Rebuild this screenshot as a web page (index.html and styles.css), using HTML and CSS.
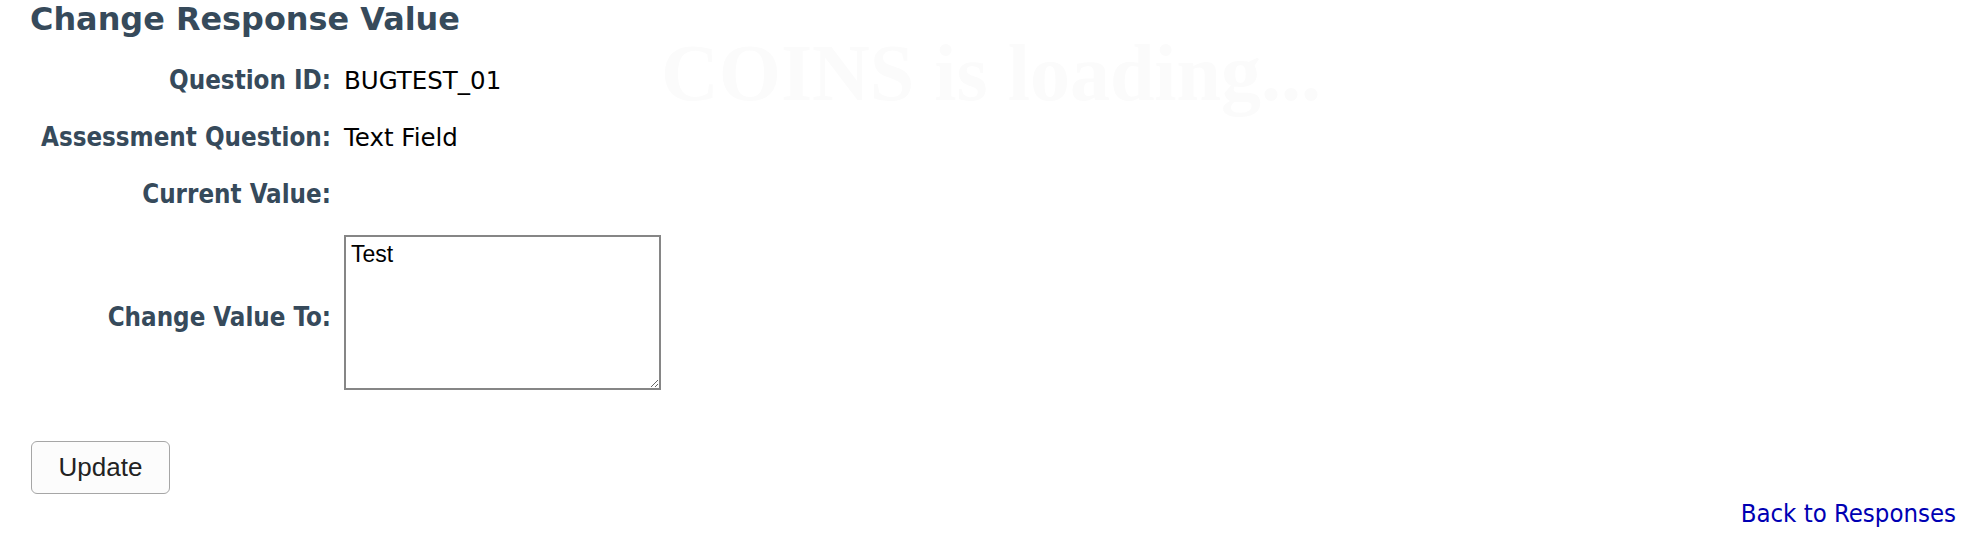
FILE: index.html
```html
<!DOCTYPE html>
<html lang="en">
<head>
    <meta charset="UTF-8">
    <title>Change Response Value</title>
    <link rel="stylesheet" href="styles.css">
</head>
<body>
    <div class="loading">COINS is loading...</div>

    <div class="page">
        <h2 class="title">Change Response Value</h2>

        <div class="form-grid">
            <div class="label">Question ID:</div>
            <div class="value">BUGTEST_01</div>

            <div class="label">Assessment Question:</div>
            <div class="value">Text Field</div>

            <div class="label">Current Value:</div>
            <div class="value"></div>

            <div class="label label-mid">Change Value To:</div>
            <div class="value"><textarea class="new-value">Test</textarea></div>
        </div>

        <button class="btn-update">Update</button>

        <div class="back"><a href="#">Back to Responses</a></div>
    </div>
</body>
</html>
```

FILE: styles.css
```css
* {
    margin: 0;
    padding: 0;
}
body {
    background: #fff;
    font-family: "DejaVu Sans", Verdana, sans-serif;
    color: #000;
}

/* faint loading message sitting over the page */
.loading {
    position: absolute;
    top: 33px;
    left: 0;
    width: 100%;
    text-align: center;
    font-family: "Liberation Serif", "Times New Roman", serif;
    font-weight: bold;
    font-size: 80px;
    line-height: 80px;
    color: #fbfbfb;
    pointer-events: none;
}

.page {
    position: relative;
    padding: 1px 0 0 30px;
}
.title {
    font-family: "DejaVu Sans", Verdana, sans-serif;
    font-weight: bold;
    font-size: 31.9px;
    line-height: 37px;
    color: #364a5b;
}

.form-grid {
    display: grid;
    grid-template-columns: 301px auto;
    column-gap: 13px;
    row-gap: 24px;
    margin-top: 26px;
    align-items: start;
}
.label {
    text-align: right;
    font-family: "DejaVu Sans Condensed", "DejaVu Sans", sans-serif;
    font-stretch: condensed;
    font-weight: bold;
    font-size: 25.7px;
    line-height: 33px;
    color: #364a5b;
}
.label-mid {
    align-self: center;
    padding-top: 9px;
}
.value {
    font-family: "DejaVu Sans", Verdana, sans-serif;
    font-size: 24.5px;
    line-height: 33px;
    min-height: 33px;
}

.new-value {
    display: block;
    box-sizing: border-box;
    width: 317px;
    height: 155px;
    border: 2px solid #868686;
    padding: 4px 5px;
    font-family: "Liberation Sans", Arial, sans-serif;
    font-size: 23px;
    color: #000;
    background: #fff;
    outline: none;
}

.btn-update {
    display: block;
    box-sizing: border-box;
    width: 139px;
    height: 53px;
    margin-top: 51px;
    margin-left: 1px;
    border: 1.5px solid #a6a6a6;
    border-radius: 6px;
    background: #fcfcfc;
    font-family: "Liberation Sans", Arial, sans-serif;
    font-size: 26px;
    color: #222;
    cursor: pointer;
}

.back {
    margin-top: 4px;
    padding-right: 26px;
    text-align: right;
    font-family: "DejaVu Sans Condensed", "DejaVu Sans", sans-serif;
    font-stretch: condensed;
    font-size: 25.5px;
}
.back a {
    color: #0000b3;
    text-decoration: none;
}
```
